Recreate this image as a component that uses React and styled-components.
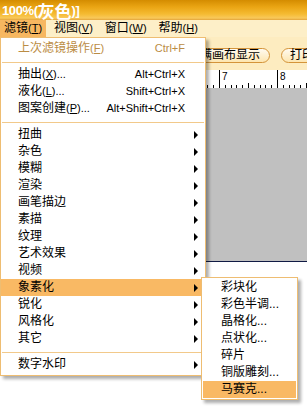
import React from "react";
import styled, { createGlobalStyle } from "styled-components";

const GlobalStyle = createGlobalStyle`
  html, body {
    margin: 0;
    padding: 0;
    background: #fff;
  }
  body {
    font-family: "Liberation Sans", "Noto Sans CJK SC", sans-serif;
    font-size: 12px;
    color: #000;
  }
`;

const FILTERS = [
  "扭曲", "杂色", "模糊", "渲染", "画笔描边", "素描", "纹理",
  "艺术效果", "视频", "象素化", "锐化", "风格化", "其它",
];

const MENU = [
  { label: "上次滤镜操作", hot: "F", shortcut: "Ctrl+F", disabled: true },
  "sep",
  { label: "抽出", hot: "X", dots: true, shortcut: "Alt+Ctrl+X" },
  { label: "液化", hot: "L", dots: true, shortcut: "Shift+Ctrl+X" },
  { label: "图案创建", hot: "P", dots: true, shortcut: "Alt+Shift+Ctrl+X" },
  "sep",
  ...FILTERS.map((f) => ({ label: f, sub: true, active: f === "象素化" })),
  "sep",
  { label: "数字水印", sub: true },
];

const PIXELATE = [
  "彩块化", "彩色半调...", "晶格化...", "点状化...", "碎片", "铜版雕刻...", "马赛克...",
];

const MENUBAR = [
  { label: "滤镜", hot: "T", open: true },
  { label: "视图", hot: "V" },
  { label: "窗口", hot: "W" },
  { label: "帮助", hot: "H" },
];

const Screen = styled.div`
  position: relative;
  width: 307px;
  height: 406px;
  overflow: hidden;
  background: #fff;
`;

const TitleBar = styled.div`
  height: 20px;
  display: flex;
  align-items: center;
  padding-left: 2px;
  background: linear-gradient(
    to bottom,
    #d48c00 0%,
    #eaa514 35%,
    #f5bb32 70%,
    #f9c95a 90%,
    #e2a43a 100%
  );
  color: #fff;
  font-weight: bold;
  white-space: nowrap;
`;

const TitleLatin = styled.span`
  font-family: "Liberation Sans", sans-serif;
  font-size: 13px;
  letter-spacing: -0.4px;
`;

const TitleCjk = styled.span`
  font-family: "Noto Sans CJK SC", sans-serif;
  font-size: 17px;
  line-height: 19px;
`;

const MenuBar = styled.div`
  height: 17px;
  display: flex;
  gap: 4px;
  background: #fdefc8;
`;

const BarItem = styled.div`
  padding: 0 4px;
  line-height: 17px;
  background: ${(p) => (p.$open ? "#f7b760" : "transparent")};
`;

const Toolbar = styled.div`
  height: 33px;
  box-sizing: border-box;
  display: flex;
  align-items: flex-start;
  gap: 11px;
  padding: 11px 0 0 190px;
  background: #fdecc0;
  white-space: nowrap;
`;

const PillButton = styled.div`
  height: 15px;
  box-sizing: border-box;
  padding: 0 9px 0 ${(p) => p.$padLeft || 9}px;
  border: 1px solid #d4943a;
  border-radius: 8px;
  background: linear-gradient(to bottom, #fffaf0, #fde6b0);
  line-height: 13px;
  font-size: 12px;
`;

const RulerStrip = styled.div`
  height: 18px;
  background: #fff;
`;

const Canvas = styled.div`
  height: 173px;
  background: #c0c0c0;
  border-bottom: 1px solid #101a44;
`;

const Menu = styled.div`
  position: absolute;
  top: ${(p) => p.$top}px;
  left: ${(p) => p.$left}px;
  width: ${(p) => p.$width}px;
  box-sizing: border-box;
  padding: ${(p) => p.$pad}px 0;
  background: #fff;
  border: 1px solid #eebd72;
  box-shadow: 3px 3px 3px rgba(0, 0, 0, 0.32);
`;

const Row = styled.div`
  position: relative;
  height: 17px;
  line-height: 17px;
  display: flex;
  justify-content: space-between;
  padding: 0 20px 0 ${(p) => p.$indent}px;
  margin: 0 ${(p) => p.$inset || 0}px;
  white-space: nowrap;
  color: ${(p) => (p.$disabled ? "#bb8c44" : "#000")};
  background: ${(p) => (p.$active ? "#f9b964" : "transparent")};
`;

const Shortcut = styled.span`
  font-size: 11px;
`;

const Arrow = styled.span`
  position: absolute;
  right: 7px;
  top: 5px;
  width: 0;
  height: 0;
  border-left: 4px solid #000;
  border-top: 4px solid transparent;
  border-bottom: 4px solid transparent;
`;

const Separator = styled.div`
  height: 1px;
  margin: 5px 1px 3px;
  background: #f2c98a;
`;

const Hot = styled.span`
  font-size: 11px;
  u {
    text-decoration: underline;
  }
`;

const Label = ({ label, hot, dots }) => (
  <span>
    {label}
    {hot && (
      <Hot>
        (<u>{hot}</u>){dots ? "..." : ""}
      </Hot>
    )}
  </span>
);

// ruler ticks: one unit is 58px, tenths in between
const Ruler = () => {
  const ticks = [];
  for (let i = -6; i <= 15; i++) {
    const x = Math.round(219 + i * 5.8) + 0.5;
    const h = i % 10 === 0 ? 18 : i % 5 === 0 ? 5 : 3;
    ticks.push(<line key={i} x1={x} x2={x} y1={18 - h} y2={18} stroke="#000" strokeWidth="1" />);
  }
  return (
    <svg width="307" height="18" style={{ display: "block" }}>
      {ticks}
      <text x={222} y={10} fontSize="10" fontFamily="Liberation Sans, sans-serif">7</text>
      <text x={280} y={10} fontSize="10" fontFamily="Liberation Sans, sans-serif">8</text>
    </svg>
  );
};

export default function App() {
  return (
    <Screen>
      <GlobalStyle />
      <TitleBar>
        <TitleLatin>100%(</TitleLatin>
        <TitleCjk>灰色</TitleCjk>
        <TitleLatin>)]</TitleLatin>
      </TitleBar>
      <MenuBar>
        {MENUBAR.map((m) => (
          <BarItem key={m.label} $open={m.open}>
            <Label label={m.label} hot={m.hot} />
          </BarItem>
        ))}
      </MenuBar>
      <Toolbar>
        <PillButton>满画布显示</PillButton>
        <PillButton $padLeft={8}>打印尺寸</PillButton>
      </Toolbar>
      <RulerStrip>
        <Ruler />
      </RulerStrip>
      <Canvas />

      <Menu $top={37} $left={0} $width={206} $pad={2}>
        {MENU.map((item, i) =>
          item === "sep" ? (
            <Separator key={"s" + i} />
          ) : (
            <Row key={item.label} $indent={17} $active={item.active} $disabled={item.disabled}>
              <Label label={item.label} hot={item.hot} dots={item.dots} />
              {item.shortcut && <Shortcut>{item.shortcut}</Shortcut>}
              {item.sub && <Arrow />}
            </Row>
          )
        )}
      </Menu>

      <Menu $top={277} $left={201} $width={97} $pad={1}>
        {PIXELATE.map((name, i) => (
          <Row key={name} $indent={18} $inset={1} $active={i === PIXELATE.length - 1}>
            <span>{name}</span>
          </Row>
        ))}
      </Menu>
    </Screen>
  );
}
